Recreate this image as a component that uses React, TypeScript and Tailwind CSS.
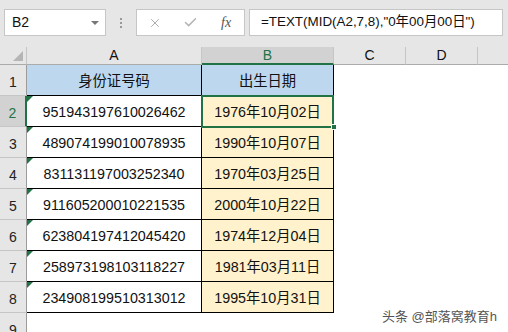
import { Check, X } from 'lucide-react';

const rows = [
  ['951943197610026462', '1976年10月02日'],
  ['489074199010078935', '1990年10月07日'],
  ['831131197003252340', '1970年03月25日'],
  ['911605200010221535', '2000年10月22日'],
  ['623804197412045420', '1974年12月04日'],
  ['258973198103118227', '1981年03月11日'],
  ['234908199510313012', '1995年10月31日'],
];

function RowHead({ n, active }: { n: number; active?: boolean }) {
  return (
    <div
      className={
        active
          ? 'flex items-end justify-center border-b border-r-2 border-b-[#c6c6c6] border-r-[#217346] bg-[#d2d2d2] pb-[2px] text-[14px] text-[#217346]'
          : 'flex items-end justify-center border-b border-r border-b-[#c6c6c6] border-r-[#9b9b9b] bg-[#e6e6e6] pb-[2px] text-[14px] text-[#222]'
      }
    >
      {n}
    </div>
  );
}

export default function App() {
  return (
    <div
      className="relative flex h-[332px] w-[508px] flex-col overflow-hidden bg-white text-[#111]"
      style={{ fontFamily: '"Liberation Sans", "Noto Sans CJK SC", sans-serif' }}
    >
      {/* formula bar */}
      <div className="flex h-[47px] shrink-0 items-start bg-[#e6e6e6] pt-[9px]">
        <div className="ml-[4px] flex h-[27px] w-[102px] items-center justify-between border border-[#c6c6c6] bg-white pl-[7px] pr-[6px] text-[14px]">
          <span>B2</span>
          <span className="h-0 w-0 border-x-[4px] border-t-[4px] border-x-transparent border-t-[#777]" />
        </div>
        <div className="flex h-[27px] w-[30px] flex-col items-center justify-center gap-[2px]">
          <span className="h-[2px] w-[2px] bg-[#999]" />
          <span className="h-[2px] w-[2px] bg-[#999]" />
          <span className="h-[2px] w-[2px] bg-[#999]" />
        </div>
        <div className="flex h-[27px] w-[109px] items-center border border-[#c6c6c6] bg-white">
          <div className="flex w-[36px] justify-center pl-[1px]">
            <X size={14} strokeWidth={1.6} color="#a6a6a6" />
          </div>
          <div className="flex w-[36px] justify-center">
            <Check size={15} strokeWidth={2.4} color="#b4b4b4" />
          </div>
          <div
            className="flex w-[36px] justify-center text-[14px] italic text-[#555]"
            style={{ fontFamily: '"Liberation Serif", serif' }}
          >
            fx
          </div>
        </div>
        <div className="ml-[4px] flex h-[27px] w-[254px] items-center border border-[#c6c6c6] bg-white pl-[11px] text-[13.4px]">
          =TEXT(MID(A2,7,8),"0年00月00日")
        </div>
      </div>

      {/* sheet */}
      <div className="grid flex-1 grid-cols-[27px_175px_132px_72px_72px_1fr] grid-rows-[18px_repeat(9,31px)] overflow-hidden">
        <div className="relative border-b border-r border-b-[#ababab] border-r-[#c6c6c6] bg-[#e6e6e6]">
          <span className="absolute bottom-[3px] right-[3px] h-0 w-0 border-b-[10px] border-l-[10px] border-b-[#b5b5b5] border-l-transparent" />
        </div>
        <div className="flex items-center justify-center border-b border-r border-b-[#ababab] border-r-[#c6c6c6] bg-[#e6e6e6] text-[14px]">A</div>
        <div className="flex items-center justify-center border-b-2 border-r border-b-[#217346] border-r-[#c6c6c6] bg-[#d2d2d2] text-[14px] text-[#217346]">B</div>
        <div className="flex items-center justify-center border-b border-r border-b-[#ababab] border-r-[#c6c6c6] bg-[#e6e6e6] text-[14px]">C</div>
        <div className="flex items-center justify-center border-b border-r border-b-[#ababab] border-r-[#c6c6c6] bg-[#e6e6e6] text-[14px]">D</div>
        <div className="border-b border-b-[#ababab] bg-[#e6e6e6]" />

        <RowHead n={1} />
        <div className="flex items-center justify-center border-b border-r border-black bg-[#bdd7ee] pt-[3px] text-[14.3px]">身份证号码</div>
        <div className="flex items-center justify-center border-b border-r border-black bg-[#bdd7ee] pt-[3px] text-[14.3px]">出生日期</div>
        <div />
        <div />
        <div />

        {rows.map(([id, date], i) => (
          <div key={id} className="contents">
            <RowHead n={i + 2} active={i === 0} />
            <div className="relative flex items-center justify-center border-b border-r border-black pt-[3px] text-[14.3px]">
              <span className="absolute left-0 top-0 h-0 w-0 border-r-[6px] border-t-[6px] border-r-transparent border-t-[#217346]" />
              {id}
            </div>
            <div className="relative flex items-center justify-center border-b border-r border-black bg-[#fff2cc] pt-[3px] text-[14.3px]">
              {i === 0 ? (
                <>
                  <span className="absolute inset-x-[-1px] bottom-[-2px] top-[-1px] z-10 border-2 border-[#217346]" />
                  <span className="absolute bottom-[-4px] right-[-4px] z-20 h-[6px] w-[6px] border border-white bg-[#217346]" />
                </>
              ) : null}
              {date}
            </div>
            <div />
            <div />
            <div />
          </div>
        ))}

        <RowHead n={9} />
        <div />
        <div />
        <div />
        <div />
        <div />
      </div>

      <div className="absolute bottom-[6px] right-[11px] text-[13px] text-[#555]">头条 @部落窝教育h</div>
    </div>
  );
}
